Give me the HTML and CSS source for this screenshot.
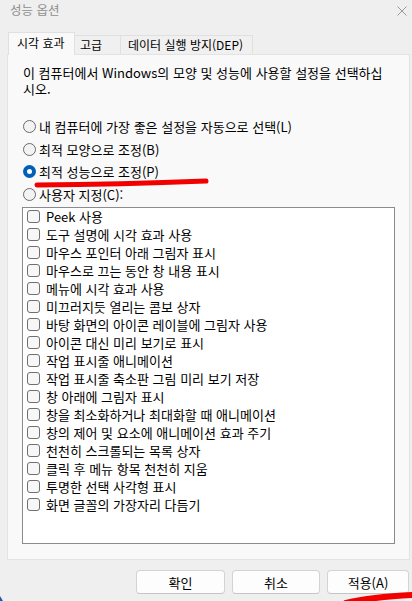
FILE: index.html
```html
<!DOCTYPE html>
<html lang="ko">
<head>
<meta charset="utf-8">
<title>성능 옵션</title>
<link rel="stylesheet" href="styles.css">
</head>
<body>
<div class="window">
  <div class="titlebar">
    <span class="title">성능 옵션</span>
    <svg class="close" width="10" height="10" viewBox="0 0 10 10"><path d="M0.5 0.5L9.5 9.5M9.5 0.5L0.5 9.5" stroke="#9a9a9a" stroke-width="1" fill="none"/></svg>
  </div>
  <div class="tabs">
    <div class="tab tab-active tab-1">시각 효과</div>
    <div class="tab tab-2">고급</div>
    <div class="tab tab-3">데이터 실행 방지(DEP)</div>
  </div>
  <div class="panel">
    <p class="desc"><span class="desc-line">이 컴퓨터에서 Windows의 모양 및 성능에 사용할 설정을 선택하십</span><span class="desc-line">시오.</span></p>
    <div class="radios">
      <div class="radio-row"><span class="radio"></span><span>내 컴퓨터에 가장 좋은 설정을 자동으로 선택(L)</span></div>
      <div class="radio-row"><span class="radio"></span><span>최적 모양으로 조정(B)</span></div>
      <div class="radio-row"><span class="radio radio-on"></span><span>최적 성능으로 조정(P)</span></div>
      <div class="radio-row"><span class="radio"></span><span>사용자 지정(C):</span></div>
    </div>
    <div class="listbox">
      <div class="check-row"><span class="check"></span><span>Peek 사용</span></div>
      <div class="check-row"><span class="check"></span><span>도구 설명에 시각 효과 사용</span></div>
      <div class="check-row"><span class="check"></span><span>마우스 포인터 아래 그림자 표시</span></div>
      <div class="check-row"><span class="check"></span><span>마우스로 끄는 동안 창 내용 표시</span></div>
      <div class="check-row"><span class="check"></span><span>메뉴에 시각 효과 사용</span></div>
      <div class="check-row"><span class="check"></span><span>미끄러지듯 열리는 콤보 상자</span></div>
      <div class="check-row"><span class="check"></span><span>바탕 화면의 아이콘 레이블에 그림자 사용</span></div>
      <div class="check-row"><span class="check"></span><span>아이콘 대신 미리 보기로 표시</span></div>
      <div class="check-row"><span class="check"></span><span>작업 표시줄 애니메이션</span></div>
      <div class="check-row"><span class="check"></span><span>작업 표시줄 축소판 그림 미리 보기 저장</span></div>
      <div class="check-row"><span class="check"></span><span>창 아래에 그림자 표시</span></div>
      <div class="check-row"><span class="check"></span><span>창을 최소화하거나 최대화할 때 애니메이션</span></div>
      <div class="check-row"><span class="check"></span><span>창의 제어 및 요소에 애니메이션 효과 주기</span></div>
      <div class="check-row"><span class="check"></span><span>천천히 스크롤되는 목록 상자</span></div>
      <div class="check-row"><span class="check"></span><span>클릭 후 메뉴 항목 천천히 지움</span></div>
      <div class="check-row"><span class="check"></span><span>투명한 선택 사각형 표시</span></div>
      <div class="check-row"><span class="check"></span><span>화면 글꼴의 가장자리 다듬기</span></div>
    </div>
  </div>
  <div class="buttons">
    <button class="btn btn-ok">확인</button>
    <button class="btn btn-cancel">취소</button>
    <button class="btn btn-apply">적용(A)</button>
  </div>
  <svg class="marks" width="412" height="601" viewBox="0 0 412 601">
    <path d="M37 185 Q120 184.5 206 181" stroke="#f20000" stroke-width="5" stroke-linecap="round" fill="none"/>
    <path d="M346 603 Q372 597 414 595" stroke="#f20000" stroke-width="6" stroke-linecap="round" fill="none"/>
    <polygon points="0,596 3,601 0,601" fill="#1e5bb8"/>
  </svg>
</div>
</body>
</html>
```

FILE: styles.css
```css
* { box-sizing: border-box; }
html, body { margin: 0; padding: 0; }
body {
  background: #efefef;
  font-family: "Noto Sans CJK KR", "Noto Sans", sans-serif;
  font-size: 13px;
  color: #000;
}
.window {
  position: relative;
  width: 412px;
  height: 601px;
  display: flex;
  flex-direction: column;
  overflow: hidden;
}
.titlebar {
  height: 32px;
  display: flex;
  align-items: flex-start;
  justify-content: space-between;
  padding: 1px 5px 0 10px;
}
.title {
  color: #8e8e8e;
  font-size: 12.5px;
  line-height: 18px;
}
.close { margin-top: 5px; }
.tabs {
  display: flex;
  align-items: flex-end;
  padding-left: 8px;
  height: 22px;
  position: relative;
  z-index: 1;
}
.tab {
  height: 19px;
  border: 1px solid #e0e0e0;
  border-bottom: none;
  background: #f0f0f0;
  line-height: 17px;
  font-size: 12px;
  padding-left: 5px;
  margin-left: -1px;
}
.tab-active {
  background: #f9f9f9;
  padding-left: 8px;
  line-height: 20px;
  margin-left: 0;
  margin-bottom: -1px;
  height: 23px;
}
.tab-1 { width: 67px; }
.tab-2 { width: 47px; }
.tab-3 { width: 133px; padding-left: 7px; }
.panel {
  margin: 0 2px 0 7px;
  height: 506px;
  background: #f9f9f9;
  border: 1px solid #e3e3e3;
  padding: 10px 13px 0 15px;
}
.desc {
  margin: 0;
  display: flex;
  flex-direction: column;
}
.desc-line {
  display: block;
  height: 15.5px;
  line-height: 15.5px;
}
.radios {
  margin-top: 19px;
  display: flex;
  flex-direction: column;
}
.radio-row {
  height: 22.7px;
  display: flex;
  align-items: center;
  gap: 3px;
}
.radio {
  width: 13px;
  height: 13px;
  border: 1px solid #6a6a6a;
  border-radius: 50%;
  background: #f3f3f3;
  flex: none;
}
.radio-on {
  border: none;
  background: #005fb8;
  display: flex;
  align-items: center;
  justify-content: center;
}
.radio-on::after {
  content: "";
  width: 5px;
  height: 5px;
  border-radius: 50%;
  background: #fff;
}
.listbox {
  margin-top: 1px;
  margin-left: -1px;
  width: 373px;
  height: 337px;
  background: #fff;
  border: 1px solid #8a8a8f;
  padding: 0 0 0 4px;
}
.check-row {
  height: 18px;
  display: flex;
  align-items: center;
  gap: 6px;
}
.check {
  width: 13px;
  height: 13px;
  border: 1px solid #707070;
  border-radius: 3px;
  background: #f7f7f7;
  flex: none;
}
.buttons {
  display: flex;
  justify-content: flex-end;
  gap: 7px;
  padding: 10px 3px 0 0;
}
.btn {
  height: 24px;
  border: 1px solid #d3d3d3;
  border-bottom-color: #c4c4c4;
  border-radius: 4px;
  background: #fdfdfd;
  font-family: inherit;
  font-size: 13px;
  color: #000;
  padding: 0;
}
.btn-ok { width: 89px; }
.btn-cancel { width: 88px; }
.btn-apply { width: 82px; }
.marks {
  position: absolute;
  left: 0;
  top: 0;
  pointer-events: none;
}
```
